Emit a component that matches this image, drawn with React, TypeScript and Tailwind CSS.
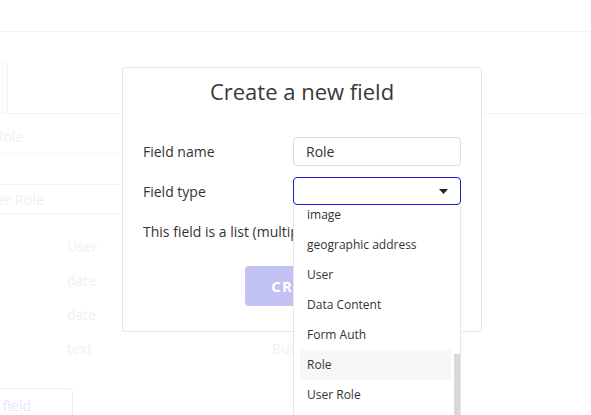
import React from "react";

const font = { fontFamily: '"Open Sans", "Noto Sans", sans-serif' };

export default function App() {
  const items = ["image", "geographic address", "User", "Data Content", "Form Auth", "Role", "User Role", "Text"];
  return (
    <div className="relative w-[591px] h-[415px] overflow-hidden bg-white" style={font}>
      {/* faded background page */}
      <div className="flex flex-col w-full">
        <div className="h-[32px] border-b border-[#f4f4f4]" />
        <div className="h-[81px] flex items-end">
          <div className="w-[8px] h-[51px] bg-[#fcfcfc] border-r border-[#f2f2f2]" />
        </div>
        <div className="h-[40px] border-t border-[#f4f4f4] flex items-center pt-[6px] text-[14px] text-[#efefef]">
          <span className="ml-[-5px]">Role</span>
        </div>
        <div className="h-[31px] border-t border-[#f6f6f6] w-[300px]" />
        <div className="h-[30px] border-t border-b border-[#f4f4f4] w-[300px] flex items-center text-[14px] text-[#efefef]">
          <span className="ml-[-19px]">User Role</span>
        </div>
        <div className="flex flex-col pt-[15px] text-[14px] text-[#f0f0f0]">
          {[
            ["User", ""],
            ["date", ""],
            ["date", ""],
            ["text", "Built-in"],
          ].map(([t, b], i) => (
            <div key={i} className="h-[34px] flex items-center">
              <span className="ml-[67px] w-[205px]">{t}</span>
              <span className="text-[#f0f0f0]">{b}</span>
            </div>
          ))}
        </div>
        <div className="mt-[23px] ml-[-40px] w-[113px] h-[40px] border border-[#eeebfc] rounded-[4px] flex items-start pt-[6px] justify-end pr-[41px] text-[14px] text-[#e8e5fb]">
          <span className="whitespace-nowrap">new field</span>
        </div>
      </div>

      {/* modal */}
      <div className="absolute left-[122px] top-[67px] w-[360px] h-[265px] bg-white border border-[#e6e6e6] rounded-[3px] flex flex-col px-[20px]">
        <div className="text-center text-[22px] text-[#383838] mt-[8px] leading-[30px]">Create a new field</div>
        <div className="flex items-center justify-between mt-[31px]">
          <span className="text-[14px] text-[#333]">Field name</span>
          <div className="w-[168px] h-[29px] border border-[#dcdcdc] rounded-[4px] flex items-center px-[12px] text-[14px] text-[#333]">
            Role
          </div>
        </div>
        <div className="flex items-center justify-between mt-[11px]">
          <span className="text-[14px] text-[#333]">Field type</span>
          <div className="relative w-[168px] h-[28px] border border-[#1a1ad6] rounded-[4px] flex items-center justify-end pr-[12px]">
            <svg width="9" height="5" viewBox="0 0 9 5">
              <path d="M0 0 H9 L4.5 5 Z" fill="#222" />
            </svg>
            <div className="absolute left-[-1px] top-[27px] w-[168px] h-[220px] bg-white border-x border-[#e6e6e6] overflow-hidden">
              <div className="flex flex-col mt-[-5px]">
                {items.map((it) => (
                  <div key={it} className="h-[30px] px-[6px] flex items-center">
                    <div
                      className={
                        "w-[151px] h-[30px] flex items-center px-[7px] text-[12px] text-[#333] " +
                        (it === "Role" ? "bg-[#f7f7f7]" : "")
                      }
                    >
                      {it}
                    </div>
                  </div>
                ))}
              </div>
              <div className="absolute right-[0px] top-[149px] w-[6px] h-[80px] bg-[#d9d9d9]" />
            </div>
          </div>
        </div>
        <div className="text-[14px] text-[#333] mt-[16px] whitespace-nowrap">This field is a list (multiple entries)</div>
        <div className="flex justify-center mt-[24px]">
          <div className="w-[114px] h-[40px] rounded-[4px] bg-[#c2c2f3] flex items-center justify-center text-[15px] font-bold text-white tracking-[1px]">
            CREATE
          </div>
        </div>
      </div>
    </div>
  );
}
